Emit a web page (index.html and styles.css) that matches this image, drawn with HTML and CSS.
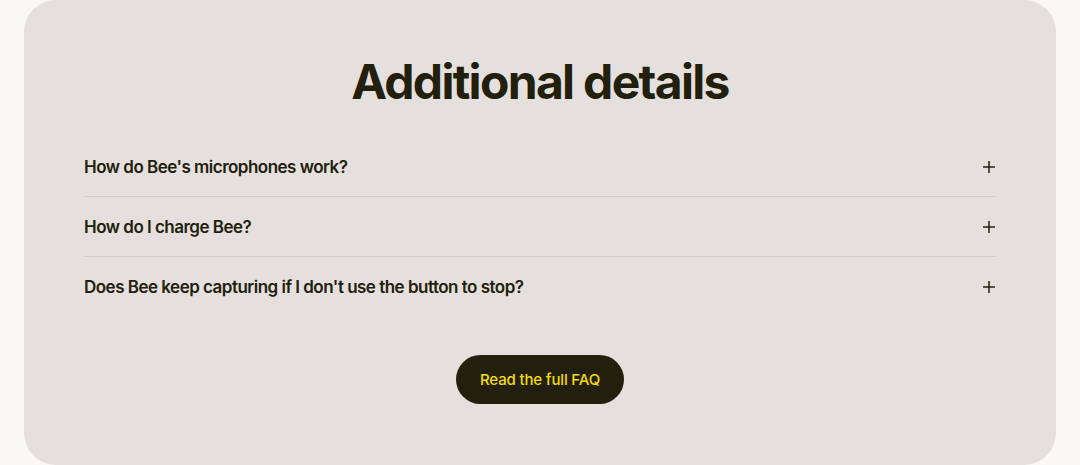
FILE: index.html
```html
<!DOCTYPE html>
<html>
<head lang="en">
    <meta charset="UTF-8">
    <title>Additional details</title>
    <link rel="stylesheet" href="styles.css">
</head>
<body>
    <div class="faq">
        <h2 class="faq-title">Additional details</h2>
        <ul class="faq-list">
            <li class="faq-item">
                <span class="question">How do Bee's microphones work?</span>
                <svg class="plus" width="12" height="12" viewBox="0 0 12 12"><path d="M6 0v12M0 6h12" stroke="#22200c" stroke-width="1.5"/></svg>
            </li>
            <li class="faq-item">
                <span class="question">How do I charge Bee?</span>
                <svg class="plus" width="12" height="12" viewBox="0 0 12 12"><path d="M6 0v12M0 6h12" stroke="#22200c" stroke-width="1.5"/></svg>
            </li>
            <li class="faq-item">
                <span class="question">Does Bee keep capturing if I don't use the button to stop?</span>
                <svg class="plus" width="12" height="12" viewBox="0 0 12 12"><path d="M6 0v12M0 6h12" stroke="#22200c" stroke-width="1.5"/></svg>
            </li>
        </ul>
        <div class="faq-more">
            <a class="button" href="#">Read the full FAQ</a>
        </div>
    </div>
</body>
</html>
```

FILE: styles.css
```css
*{padding:0;margin:0;box-sizing:border-box}
li{list-style:none;}
body{background:#f9f8f7;font-family:Inter,"Liberation Sans",sans-serif;color:#22200c;}
.faq{margin:0 24px;height:465px;background:#e5e0dd;border-radius:32px;padding:54px 60px 0;}
.faq-title{font-size:48px;font-weight:700;letter-spacing:-0.035em;text-align:center;line-height:56px;margin-bottom:27px;}
.faq-item{height:60px;display:flex;align-items:center;justify-content:space-between;border-bottom:1px solid #d3cecb;padding-right:1px;}
.faq-item:last-child{border-bottom:none;}
.question{font-size:17px;font-weight:600;letter-spacing:-0.03em;}
.faq-more{display:flex;justify-content:center;margin-top:38px;}
.button{display:block;width:168px;height:49px;line-height:49px;text-align:center;border-radius:25px;background:#22200c;color:#f5dc0a;font-size:15px;font-weight:500;text-decoration:none;letter-spacing:-0.01em;}
```
